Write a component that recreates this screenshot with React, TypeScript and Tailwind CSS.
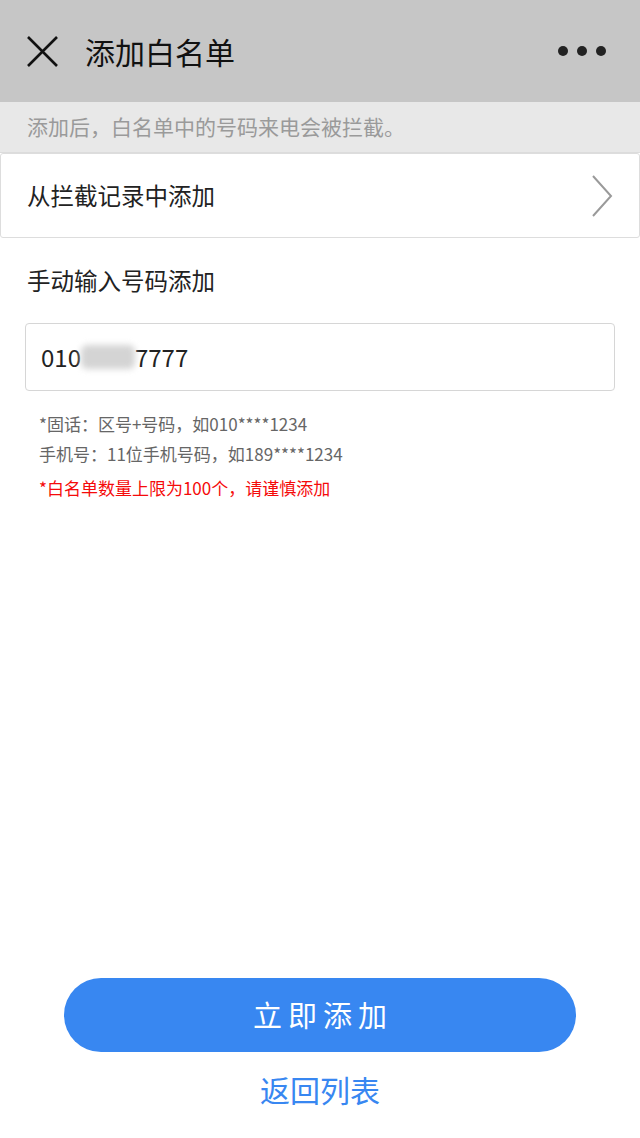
export default function App() {
  return (
    <div
      className="flex min-h-[1138px] w-[640px] flex-col bg-white"
      style={{ fontFamily: '"Noto Sans CJK SC", "Noto Sans", sans-serif' }}
    >
      {/* Header */}
      <div className="flex h-[102px] items-center bg-[#c6c6c6] pl-[27px] pr-[34px]">
        <svg width="31" height="31" viewBox="0 0 31 31" className="shrink-0">
          <path d="M1 1 L30 30 M30 1 L1 30" stroke="#111" strokeWidth="2.6" fill="none" />
        </svg>
        <div className="ml-[27px] text-[30px] leading-none text-[#111]">添加白名单</div>
        <div className="ml-auto flex items-center gap-[9px]">
          <span className="h-[10px] w-[10px] rounded-full bg-[#222]" />
          <span className="h-[10px] w-[10px] rounded-full bg-[#222]" />
          <span className="h-[10px] w-[10px] rounded-full bg-[#222]" />
        </div>
      </div>

      {/* Notice */}
      <div className="flex h-[51px] items-center border-b border-[#dcdcdc] bg-[#e8e8e8] pl-[27px] text-[21px] text-[#9a9a9a]">
        添加后，白名单中的号码来电会被拦截。
      </div>

      {/* From blocked records */}
      <div className="flex h-[85px] items-center rounded-[3px] border border-[#dddddd] bg-white pl-[26px] pr-[26px]">
        <span className="text-[23.5px] text-[#222]">从拦截记录中添加</span>
        <svg width="22" height="44" viewBox="0 0 22 44" className="ml-auto">
          <path d="M2 2 L20 22 L2 42" stroke="#9a9a9a" strokeWidth="2" fill="none" />
        </svg>
      </div>

      {/* Manual */}
      <div className="px-[25px]">
        <div className="mt-[26px] pl-[2px] text-[23.5px] leading-[32px] text-[#222]">手动输入号码添加</div>
        <div className="mt-[27px] flex h-[68px] items-center rounded-[4px] border border-[#d6d6d6] pl-[15px]">
          <span className="text-[24px] text-[#222]">010</span>
          <span className="h-[24px] w-[54px] rounded-[6px] bg-[#d4d4d4] blur-[3px]" />
          <span className="text-[24px] text-[#222]">7777</span>
        </div>
        <div className="mt-[18px] pl-[14px] text-[17px] leading-[30px] text-[#666]">
          <div>*固话：区号+号码，如010****1234</div>
          <div>手机号：11位手机号码，如189****1234</div>
          <div className="mt-[4px] text-[#f50a0a]">*白名单数量上限为100个，请谨慎添加</div>
        </div>
      </div>

      <div className="flex-1" />

      {/* Actions */}
      <div className="flex flex-col items-center pb-[29px]">
        <button className="flex h-[74px] w-[512px] items-center justify-center rounded-full bg-[#3887f1] pl-[6px] text-[29px] tracking-[6px] text-white">
          立即添加
        </button>
        <div className="mt-[17px] text-[30px] leading-[40px] text-[#3887f1]">返回列表</div>
      </div>
    </div>
  );
}
